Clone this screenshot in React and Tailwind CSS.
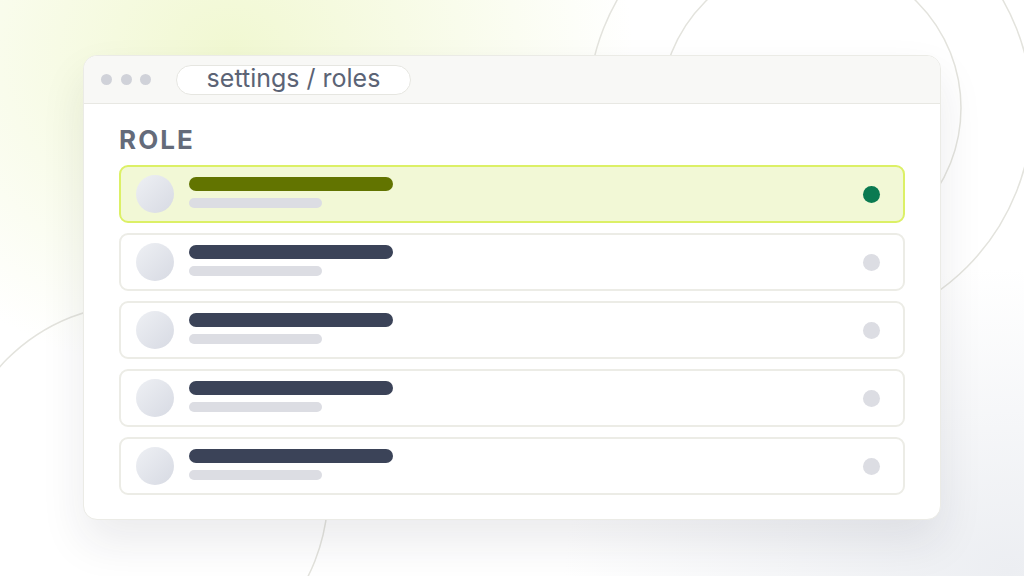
import React from "react";

const rows = [
  { selected: true },
  { selected: false },
  { selected: false },
  { selected: false },
  { selected: false },
];

function Row({ selected }) {
  return (
    <div
      className={
        "flex items-center h-[58px] rounded-[9px] pl-[15px] pr-[23px] border-2 " +
        (selected
          ? "bg-[#f2f8d6] border-[#dcf066]"
          : "bg-white border-[#ecece6]")
      }
    >
      <div className="w-[38px] h-[38px] rounded-full bg-gradient-to-br from-[#eef0f4] to-[#d7dae3] shrink-0" />
      <div className="flex flex-col gap-[7px] ml-[15px] -mt-[3px]">
        <div
          className={
            "w-[204px] h-[14px] rounded-full " +
            (selected ? "bg-[#627400]" : "bg-[#3b4358]")
          }
        />
        <div className="w-[133px] h-[10px] rounded-full bg-[#dcdde3]" />
      </div>
      <div className="flex-1" />
      <div
        className={
          "w-[17px] h-[17px] rounded-full " +
          (selected ? "bg-[#0b7a51]" : "bg-[#dcdde3]")
        }
      />
    </div>
  );
}

export default function App() {
  return (
    <div
      className="relative w-[1024px] h-[576px] overflow-hidden bg-white"
      style={{ fontFamily: "Inter, 'Noto Sans', sans-serif" }}
    >
      <div className="absolute inset-0 bg-[radial-gradient(ellipse_560px_460px_at_230px_50px,#f1f8d2_0%,rgba(255,255,255,0)_72%),radial-gradient(ellipse_620px_420px_at_1010px_570px,#eceef2_0%,rgba(255,255,255,0)_72%)]" />
      <svg
        className="absolute inset-0"
        width="1024"
        height="576"
        viewBox="0 0 1024 576"
        fill="none"
      >
        <circle cx="811" cy="108" r="150" stroke="#e3e3dd" strokeWidth="1.5" />
        <circle cx="810" cy="110" r="222" stroke="#e3e3dd" strokeWidth="1.5" />
        <circle cx="140" cy="492" r="188" stroke="#e3e3dd" strokeWidth="1.5" />
      </svg>

      <div className="relative pl-[83px] pt-[55px]">
        <div className="w-[858px] h-[465px] rounded-[14px] bg-white border border-[#ebebe6] shadow-[0_22px_45px_rgba(30,35,60,0.09)] overflow-hidden flex flex-col">
          <div className="h-[48px] shrink-0 bg-[#f8f8f6] border-b-[1.5px] border-[#e8e8e3] flex items-center pl-[17px]">
            <div className="flex items-center gap-[8.5px]">
              <div className="w-[11px] h-[11px] rounded-full bg-[#d0d2d9]" />
              <div className="w-[11px] h-[11px] rounded-full bg-[#d0d2d9]" />
              <div className="w-[11px] h-[11px] rounded-full bg-[#d0d2d9]" />
            </div>
            <div className="ml-[25px] w-[235px] h-[30px] rounded-full bg-white border-[1.5px] border-[#e6e6e1] flex items-center justify-center text-[25px] leading-none text-[#5b6375] pb-[2px]">
              settings / roles
            </div>
          </div>
          <div className="flex flex-col px-[35px] pt-[20px]">
            <div className="text-[26px] leading-[32px] font-bold tracking-[0.08em] text-[#646b7a] mb-[9px]">
              ROLE
            </div>
            <div className="flex flex-col gap-[10px]">
              {rows.map((r, i) => (
                <Row key={i} selected={r.selected} />
              ))}
            </div>
          </div>
        </div>
      </div>
    </div>
  );
}
